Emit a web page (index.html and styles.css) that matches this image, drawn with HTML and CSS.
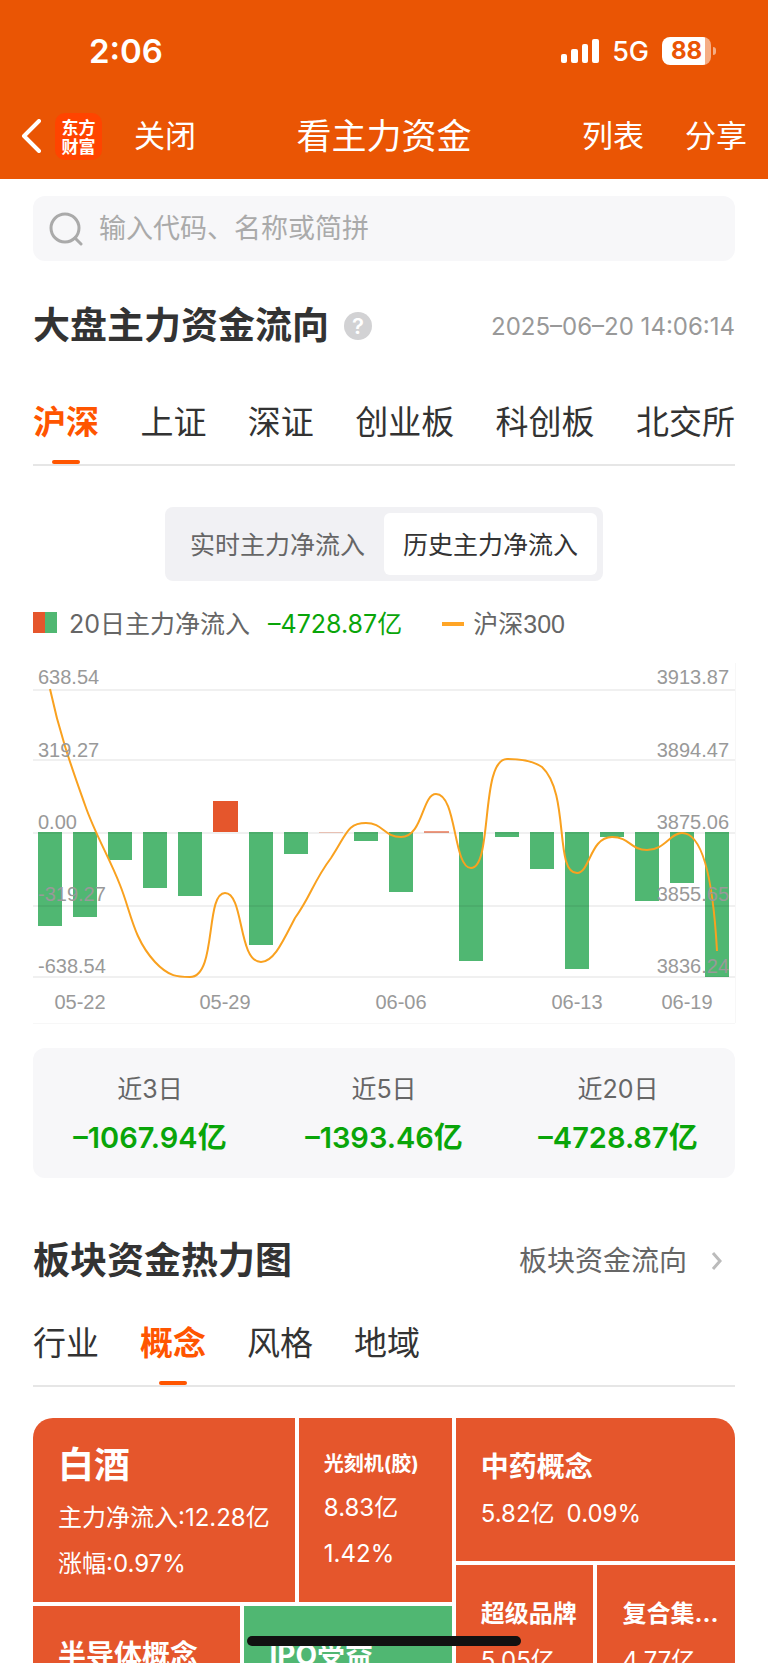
FILE: index.html
```html
<!DOCTYPE html>
<html lang="zh-CN">
<head>
    <meta charset="UTF-8">
    <meta name="viewport" content="width=device-width, initial-scale=1.0">
    <title>看主力资金</title>
    <link rel="stylesheet" href="styles.css">
</head>
<body>
    <div class="app">
        <header class="header">
            <!-- Status bar -->
            <div class="status">
                <span class="time">2:06</span>
                <div class="status-right">
                    <svg class="signal" width="38" height="24" viewBox="0 0 38 24" fill="#fff">
                        <rect x="0" y="15" width="6" height="9" rx="2"/>
                        <rect x="10" y="10" width="7" height="14" rx="2"/>
                        <rect x="21" y="5" width="6" height="19" rx="2"/>
                        <rect x="31" y="0" width="7" height="24" rx="2"/>
                    </svg>
                    <span class="network">5G</span>
                    <span class="battery">88</span>
                </div>
            </div>
            <!-- Navigation -->
            <nav class="nav">
                <div class="nav-side">
                    <button class="back" aria-label="返回">
                        <svg width="20" height="34" viewBox="0 0 20 34" fill="none" stroke="#fff" stroke-width="4" stroke-linecap="round" stroke-linejoin="round">
                            <path d="M18 2 3 17l15 15"/>
                        </svg>
                    </button>
                    <div class="logo">东方<br>财富</div>
                    <button class="nav-btn">关闭</button>
                </div>
                <h1>看主力资金</h1>
                <div class="nav-side nav-end">
                    <button class="nav-btn">列表</button>
                    <button class="nav-btn">分享</button>
                </div>
            </nav>
        </header>

        <main class="content">
            <label class="search">
                <svg width="34" height="34" viewBox="0 0 34 34" fill="none" stroke="#aaa" stroke-width="3">
                    <circle cx="16" cy="16" r="14"/>
                    <path d="M26 26l6 6" stroke-linecap="round"/>
                </svg>
                <input type="text" placeholder="输入代码、名称或简拼" aria-label="搜索">
            </label>

            <!-- Market fund flow -->
            <div class="section-head">
                <h2>大盘主力资金流向</h2>
                <button class="help" aria-label="说明">?</button>
                <time class="date">2025–06–20 14:06:14</time>
            </div>
            <div class="tabs tabs-market">
                <button class="tab active">沪深</button>
                <button class="tab">上证</button>
                <button class="tab">深证</button>
                <button class="tab">创业板</button>
                <button class="tab">科创板</button>
                <button class="tab">北交所</button>
            </div>

            <div class="segment">
                <button>实时主力净流入</button>
                <button class="selected">历史主力净流入</button>
            </div>

            <div class="legend">
                <span class="swatch"></span>
                <span>20日主力净流入</span>
                <span class="legend-value">–4728.87亿</span>
                <span class="swatch-line"></span>
                <span class="legend-index">沪深300</span>
            </div>

            <svg class="chart" viewBox="0 0 702 360">
                <path class="frame" d="M702.5 0v360M0 360.5h702"/>
                <g class="down">
                    <rect x="5" y="169" width="24" height="94"/>
                    <rect x="40" y="169" width="24" height="85"/>
                    <rect x="75" y="169" width="24" height="28"/>
                    <rect x="110" y="169" width="24" height="56"/>
                    <rect x="145" y="169" width="24" height="64"/>
                    <rect x="216" y="169" width="24" height="113"/>
                    <rect x="251" y="169" width="24" height="22"/>
                    <rect x="321" y="169" width="24" height="9"/>
                    <rect x="356" y="169" width="24" height="60"/>
                    <rect x="426" y="169" width="24" height="129"/>
                    <rect x="462" y="169" width="24" height="5"/>
                    <rect x="497" y="169" width="24" height="37"/>
                    <rect x="532" y="169" width="24" height="137"/>
                    <rect x="567" y="169" width="24" height="5"/>
                    <rect x="602" y="169" width="24" height="69"/>
                    <rect x="637" y="169" width="24" height="51"/>
                    <rect x="672" y="169" width="24" height="145"/>
                </g>
                <g class="up">
                    <rect x="180" y="138" width="25" height="31"/>
                    <rect x="286" y="169" width="24" height="1" opacity=".3"/>
                    <rect x="391" y="168" width="25" height="2" opacity=".6"/>
                </g>
                <path class="grid" d="M0 27h702M0 97h702M0 170h702M0 243h702M0 314h702"/>
                <path class="trend" d="M17 26C27 73 40 108 52 142C62 171 77 196 87 222C98 249 100 275 122 299C136 314 145 314 157 314C184 314 172 230 192 230C211 230 205 299 228 299C241 299 250 278 262 255C278 233 280 219 298 195C314 171 314 160 333 160C350 160 351 174 368 174C390 174 389 131 403 131C424 131 420 205 438 205C460 205 447 96 474 96C486 96 499 97 509 104C537 130 521 210 544 210C557 210 557 174 579 174C597 174 597 187 614 187C632 187 637 170 649 170C669 170 680 215 684 288"/>
                <g class="axis">
                    <text x="5" y="21">638.54</text>
                    <text x="5" y="94">319.27</text>
                    <text x="5" y="166">0.00</text>
                    <text x="5" y="238">-319.27</text>
                    <text x="5" y="310">-638.54</text>
                </g>
                <g class="axis axis-right">
                    <text x="696" y="21">3913.87</text>
                    <text x="696" y="94">3894.47</text>
                    <text x="696" y="166">3875.06</text>
                    <text x="696" y="238">3855.65</text>
                    <text x="696" y="310">3836.24</text>
                </g>
                <g class="axis axis-dates">
                    <text x="47" y="346">05-22</text>
                    <text x="192" y="346">05-29</text>
                    <text x="368" y="346">06-06</text>
                    <text x="544" y="346">06-13</text>
                    <text x="654" y="346">06-19</text>
                </g>
            </svg>

            <dl class="stats">
                <div><dt>近3日</dt><dd>–1067.94亿</dd></div>
                <div><dt>近5日</dt><dd>–1393.46亿</dd></div>
                <div><dt>近20日</dt><dd>–4728.87亿</dd></div>
            </dl>

            <!-- Sector heatmap -->
            <div class="section-head section-sector">
                <h2>板块资金热力图</h2>
                <a class="more" href="#">板块资金流向
                    <svg width="12" height="18" viewBox="0 0 12 18" fill="none" stroke="#bbb" stroke-width="3">
                        <path d="M2 1l7 8-7 8"/>
                    </svg>
                </a>
            </div>
            <div class="tabs">
                <button class="tab">行业</button>
                <button class="tab active">概念</button>
                <button class="tab">风格</button>
                <button class="tab">地域</button>
            </div>

            <div class="heatmap">
                <div class="heat-left">
                    <div class="tile tile-a">
                        <h3 class="big">白酒</h3>
                        <p>主力净流入:12.28亿</p>
                        <p>涨幅:0.97%</p>
                    </div>
                    <div class="tile tile-b">
                        <h3 class="small">光刻机(胶)</h3>
                        <p>8.83亿</p>
                        <p>1.42%</p>
                    </div>
                    <div class="tile tile-half">
                        <h3>半导体概念</h3>
                    </div>
                    <div class="tile tile-half fall">
                        <h3>IPO受益</h3>
                    </div>
                </div>
                <div class="heat-right">
                    <div class="tile tile-wide">
                        <h3>中药概念</h3>
                        <p><span>5.82亿</span><span>0.09%</span></p>
                    </div>
                    <div class="tile">
                        <h3 class="medium">超级品牌</h3>
                        <p>5.05亿</p>
                    </div>
                    <div class="tile">
                        <h3 class="medium">复合集...</h3>
                        <p>4.77亿</p>
                    </div>
                </div>
            </div>
        </main>
        <div class="home-bar"></div>
    </div>
</body>
</html>
```
FILE: styles.css
```css
* {
    box-sizing: border-box;
}
body {
    margin: 0;
    background: #fff;
    color: #333;
    font-family: Inter, "Noto Sans CJK SC", sans-serif;
}
h1, h2, h3, p, dl, dd {
    margin: 0;
}
button {
    border: none;
    padding: 0;
    background: none;
    color: inherit;
    font-family: inherit;
    cursor: pointer;
}
svg {
    display: block;
}
.app {
    height: 100vh;
    overflow: hidden;
    display: flex;
    flex-direction: column;
}

/* Header */
.header {
    flex: none;
    padding-bottom: 9px;
    background: #ea5504;
    color: #fff;
}
.status {
    height: 102px;
    padding: 0 52px 0 89px;
    display: flex;
    align-items: center;
    justify-content: space-between;
}
.time {
    font-size: 33px;
    font-weight: 600;
}
.status-right {
    display: flex;
    align-items: center;
    gap: 13px;
}
.network {
    font-size: 27px;
    font-weight: 500;
}
.battery {
    position: relative;
    width: 49px;
    height: 28px;
    margin-right: 5px;
    border-radius: 8px;
    background: linear-gradient(to right, #fff 43px, #f5ad85 43px);
    color: #ea5504;
    font-size: 24px;
    font-weight: 700;
    line-height: 28px;
    text-align: center;
}
.battery::after {
    content: "";
    position: absolute;
    top: 10px;
    right: -5px;
    width: 3px;
    height: 8px;
    border-radius: 0 3px 3px 0;
    background: #f5ad85;
}
.nav {
    height: 68px;
    padding: 0 21px 0 21px;
    display: flex;
    align-items: center;
}
.nav-side {
    flex: 1;
    display: flex;
    align-items: center;
}
.nav-end {
    justify-content: flex-end;
    gap: 41px;
}
.nav h1 {
    font-size: 35px;
    font-weight: 400;
    line-height: 48px;
}
.nav-btn {
    font-size: 31px;
    line-height: 44px;
}
.logo {
    width: 47px;
    height: 47px;
    margin: 0 32px 0 14px;
    padding-top: 4px;
    border-radius: 10px;
    background: #ff4400;
    font-family: "Noto Sans CJK SC", sans-serif;
    font-size: 17px;
    font-weight: 700;
    line-height: 19px;
    text-align: center;
}

/* Search */
.content {
    flex: 1;
    min-height: 0;
    padding: 0 33px;
}
.search {
    height: 65px;
    margin-top: 17px;
    padding: 0 16px;
    border-radius: 12px;
    background: #f7f7f9;
    display: flex;
    align-items: center;
    gap: 16px;
}
.search input {
    flex: 1;
    height: 44px;
    border: none;
    padding: 0;
    outline: none;
    background: none;
    font-family: inherit;
    font-size: 27px;
}
.search input::placeholder {
    color: #aaa;
}

/* Section heads and tabs */
.section-head {
    height: 60px;
    margin-top: 35px;
    display: flex;
    align-items: center;
}
.section-sector {
    margin-top: 53px;
}
.section-head h2 {
    font-size: 37px;
    font-weight: 700;
    line-height: 60px;
}
.help {
    width: 28px;
    height: 28px;
    margin-left: 15px;
    border-radius: 50%;
    background: #d2d2d4;
    color: #fff;
    font-size: 22px;
    font-weight: 600;
    line-height: 28px;
}
.date {
    margin-left: auto;
    color: #999;
    font-size: 24px;
}
.more {
    margin-left: auto;
    padding-right: 12px;
    display: flex;
    align-items: center;
    gap: 24px;
    color: #666;
    font-size: 28px;
    line-height: 44px;
    text-decoration: none;
}
.tabs {
    padding: 30px 0 20px;
    border-bottom: 2px solid #e6e6e6;
    display: flex;
    gap: 41px;
}
.tabs-market {
    margin-top: 14px;
    gap: 0;
    justify-content: space-between;
}
.tab {
    position: relative;
    font-size: 33px;
    line-height: 44px;
}
.tab.active {
    color: #ff5500;
    font-weight: 700;
}
.tab.active::after {
    content: "";
    position: absolute;
    left: 50%;
    bottom: -20px;
    width: 28px;
    height: 4px;
    margin-left: -14px;
    border-radius: 2px;
    background: #ff5500;
}

/* Chart */
.segment {
    width: fit-content;
    margin: 41px auto 0;
    padding: 6px;
    border-radius: 8px;
    background: #f1f1f4;
    display: flex;
}
.segment button {
    height: 62px;
    padding: 0 19px 3px;
    border-radius: 6px;
    color: #666;
    font-size: 25px;
}
.segment .selected {
    background: #fff;
    color: #333;
}
.legend {
    height: 38px;
    margin-top: 24px;
    display: flex;
    align-items: center;
    color: #666;
    font-size: 25px;
    line-height: 38px;
}
.swatch {
    width: 24px;
    height: 21px;
    margin: 0 12px 4px 0;
    background: linear-gradient(to right, #e5562c 50%, #50b772 50%);
}
.legend-value {
    margin-left: 18px;
    color: #09a509;
}
.swatch-line {
    width: 22px;
    height: 4px;
    margin: 0 9px 0 40px;
    background: #ffa526;
}
.legend-index {
    font-family: "Liberation Sans", "Noto Sans CJK SC", sans-serif;
}
.chart {
    width: 100%;
    margin-top: 20px;
    overflow: visible;
}
.down {
    fill: #50b772;
}
.up {
    fill: #e5562c;
}
.grid {
    fill: none;
    stroke: rgba(0, 0, 0, 0.06);
    stroke-width: 2;
}
.frame {
    fill: none;
    stroke: #f7f7f7;
}
.trend {
    fill: none;
    stroke: #f9a11f;
    stroke-width: 2;
}
.axis {
    fill: #999;
    font-family: "Liberation Sans", sans-serif;
    font-size: 20px;
}
.axis-right {
    text-anchor: end;
}
.axis-dates {
    text-anchor: middle;
}

/* Totals */
.stats {
    margin-top: 25px;
    padding: 24px 0 18px;
    border-radius: 12px;
    background: #f7f7f9;
    display: grid;
    grid-template-columns: repeat(3, 1fr);
    text-align: center;
}
.stats dt {
    color: #666;
    font-size: 25px;
    line-height: 34px;
}
.stats dd {
    margin-top: 10px;
    color: #09a509;
    font-size: 29px;
    font-weight: 600;
    line-height: 44px;
}

/* Heatmap */
.heatmap {
    margin-top: 31px;
    border-radius: 20px;
    overflow: hidden;
    display: grid;
    grid-template-columns: 3fr 2fr;
    gap: 4px;
}
.heat-left {
    display: flex;
    flex-wrap: wrap;
    gap: 4px;
}
.heat-right {
    display: grid;
    grid-template-columns: 1fr 1fr;
    grid-template-rows: 143px 225px;
    gap: 4px;
}
.tile {
    min-width: 0;
    padding: 25px 0 0 25px;
    background: #e5562c;
    color: #fff;
    font-size: 24px;
    line-height: 46px;
    white-space: nowrap;
    overflow: hidden;
}
.heat-left .tile {
    height: 184px;
}
.heat-left .tile-a {
    flex: 0 0 calc(63% - 2px);
    padding-top: 23px;
}
.tile-b,
.tile-half {
    flex: 1 1 0;
}
.tile-half {
    flex-basis: 40%;
}
.tile-wide {
    grid-column: span 2;
}
.tile-wide p {
    display: flex;
    gap: 12px;
}
.fall {
    background: #50b772;
}
.tile h3 {
    font-size: 28px;
    font-weight: 700;
    line-height: 48px;
}
.tile .big {
    margin-bottom: 6px;
    font-size: 36px;
}
.tile .medium {
    font-size: 24px;
}
.tile .small {
    font-size: 20px;
    line-height: 42px;
}
.home-bar {
    position: fixed;
    left: 50%;
    bottom: 17px;
    width: 274px;
    height: 10px;
    margin-left: -137px;
    border-radius: 5px;
    background: #111;
}
```
